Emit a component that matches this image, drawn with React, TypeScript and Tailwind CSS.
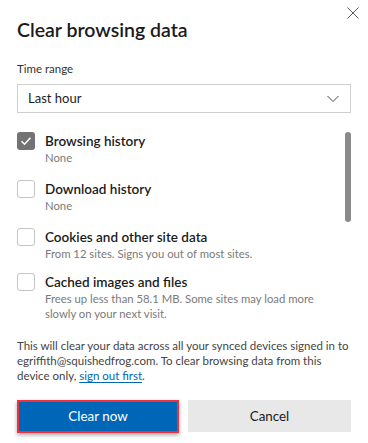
import React from 'react';

const items = [
  { label: 'Browsing history', desc: ['None'], checked: true, h: 'h-[48px]' },
  { label: 'Download history', desc: ['None'], checked: false, h: 'h-[48px]' },
  { label: 'Cookies and other site data', desc: ['From 12 sites. Signs you out of most sites.'], checked: false, h: 'h-[45px]' },
  {
    label: 'Cached images and files',
    desc: ['Frees up less than 58.1 MB. Some sites may load more', 'slowly on your next visit.'],
    checked: false,
    h: 'h-[60px]',
  },
];

const Checkbox = ({ checked }: { checked: boolean }) =>
  checked ? (
    <div className="w-[18px] h-[18px] shrink-0 rounded-[3px] bg-[#737373] flex items-center justify-center">
      <svg width="12" height="12" viewBox="0 0 12 12" fill="none">
        <path d="M1.5 6.3 L4.5 9.2 L10.5 2.8" stroke="white" strokeWidth="1.5" />
      </svg>
    </div>
  ) : (
    <div className="w-[18px] h-[18px] shrink-0 rounded-[3px] border border-[#c4c4c4] bg-white" />
  );

export default function App() {
  return (
    <div
      className="relative w-[368px] h-[443px] bg-white overflow-hidden px-[17px] pt-[17px] text-[#1b1b1b]"
      style={{ fontFamily: 'Lato, "Open Sans", sans-serif' }}
    >
      {/* close */}
      <button className="absolute top-[7px] left-[347px] w-[12px] h-[12px]">
        <svg width="12" height="12" viewBox="0 0 12 12">
          <path d="M0.5 0.5 L11.5 11.5 M11.5 0.5 L0.5 11.5" stroke="#5a5a5a" strokeWidth="1" />
        </svg>
      </button>

      <h1 className="text-[19.5px] leading-[26px] font-semibold">Clear browsing data</h1>

      <div className="mt-[18px] text-[11.5px] leading-[16px] text-[#333]">Time range</div>

      <div className="mt-[7px] h-[29px] border border-[#cfcfcf] flex items-center justify-between pl-[10px] pr-[11px]">
        <span className="text-[13px]">Last hour</span>
        <svg width="12" height="8" viewBox="0 0 12 8">
          <path d="M0.5 1 L6 6.5 L11.5 1" stroke="#444" strokeWidth="1" fill="none" />
        </svg>
      </div>

      {/* options */}
      <div className="relative mt-[19px] h-[206px]">
        <div className="absolute right-0 top-0 w-[6px] h-[90px] rounded-full bg-[#8a8a8a]" />
        {items.map((it) => (
          <div key={it.label} className={`flex gap-[10px] ${it.h}`}>
            <Checkbox checked={it.checked} />
            <div>
              <div className="text-[13.5px] leading-[18px] font-semibold">{it.label}</div>
              {it.desc.map((d) => (
                <div key={d} className="text-[11.3px] leading-[15px] text-[#7a7a7a]">
                  {d}
                </div>
              ))}
            </div>
          </div>
        ))}
      </div>

      <p className="text-[11.5px] leading-[15px] text-[#444] whitespace-nowrap">
        This will clear your data across all your synced devices signed in to
        <br />
        egriffith@squishedfrog.com. To clear browsing data from this
        <br />
        device only, <a className="text-[#0067b8] underline underline-offset-2">sign out first</a>.
      </p>

      <div className="mt-[17px] flex gap-[9px]">
        <button className="w-[162px] h-[33px] bg-[#0067b8] text-white text-[13.4px] border-2 border-[#f0303a] shadow-[0_2px_4px_rgba(0,0,0,0.35)]">
          Clear now
        </button>
        <button className="flex-1 h-[32px] bg-[#e8e8e8] text-[13.4px] text-[#1b1b1b]">Cancel</button>
      </div>
    </div>
  );
}
